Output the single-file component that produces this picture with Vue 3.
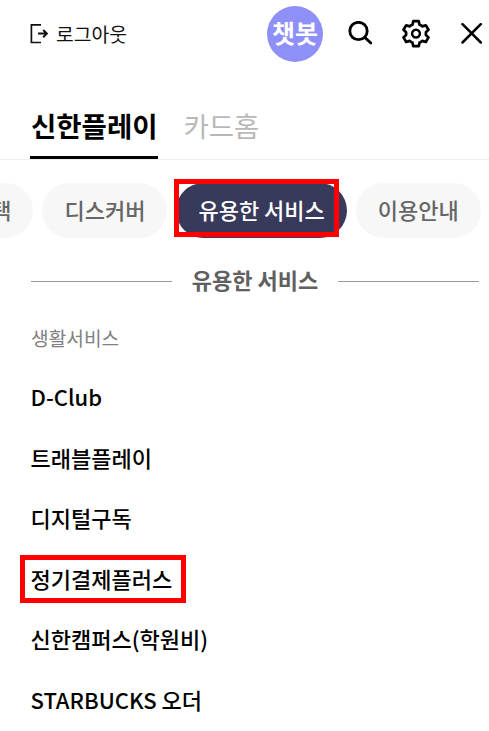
<script setup>
import { ref } from 'vue'

const tabs = ['신한플레이', '카드홈']
const activeTab = ref('신한플레이')

const categories = ['혜택', '디스커버', '유용한 서비스', '이용안내']
const activeCategory = ref('유용한 서비스')

const services = [
  { name: 'D-Club' },
  { name: '트래블플레이' },
  { name: '디지털구독' },
  { name: '정기결제플러스', marked: true },
  { name: '신한캠퍼스(학원비)' },
  { name: 'STARBUCKS 오더' }
]
</script>

<template>
  <div class="menu-page">
    <header class="top-bar">
      <button class="logout">
        <svg width="19" height="20" viewBox="0 0 19 20" fill="none" stroke="#111" stroke-width="1.7">
          <path d="M11 .9H1.4v17.6H11" />
          <path d="M8 9.6h8.6M13.2 6l3.6 3.6-3.6 3.6" stroke-width="2" />
        </svg>
        <span>로그아웃</span>
      </button>
      <div class="actions">
        <button class="chatbot">챗봇</button>
        <button class="icon-button search">
          <svg width="26" height="26" viewBox="0 0 26 26" fill="none" stroke="#000" stroke-width="2.8" stroke-linecap="round">
            <circle cx="10.5" cy="10" r="8.7" />
            <path d="M16.9 16.4l5.9 5.7" />
          </svg>
        </button>
        <button class="icon-button settings">
          <svg width="30" height="30" viewBox="0 0 30 30" fill="none" stroke="#000" stroke-width="2.7" stroke-linejoin="round">
            <path d="M12.3 2.2h5.4l.9 3.6q1.6.5 2.6 1.6l3.6-1.1 2.7 4.5-2.6 2.4v2.8l2.6 2.4-2.7 4.6-3.6-1.1q-1 1.1-2.6 1.6l-.9 3.7h-5.4l-.9-3.7q-1.6-.5-2.6-1.6L5.2 23l-2.7-4.6L5.1 16v-2.8l-2.6-2.4 2.7-4.5 3.6 1.1q1-1.1 2.6-1.6z" />
            <circle cx="15" cy="14.6" r="3.9" stroke-width="2.5" />
          </svg>
        </button>
        <button class="icon-button close">
          <svg width="22" height="22" viewBox="0 0 22 22" fill="none" stroke="#000" stroke-width="2.5" stroke-linecap="round">
            <path d="M1.5 1.2l18.3 18.3M19.8 1.2L1.5 19.5" />
          </svg>
        </button>
      </div>
    </header>

    <nav class="tabs">
      <button
        v-for="tab in tabs"
        :key="tab"
        class="tab"
        :class="{ active: tab === activeTab }"
        @click="activeTab = tab"
      >
        {{ tab }}
      </button>
    </nav>

    <div class="categories">
      <button
        v-for="category in categories"
        :key="category"
        class="category"
        :class="{ active: category === activeCategory }"
        @click="activeCategory = category"
      >
        {{ category }}
        <span v-if="category === '유용한 서비스'" class="mark"></span>
      </button>
    </div>

    <h2 class="section-title"><span>유용한 서비스</span></h2>

    <h3 class="group-title">생활서비스</h3>
    <ul class="services">
      <li v-for="service in services" :key="service.name" class="service">
        {{ service.name }}
        <span v-if="service.marked" class="mark"></span>
      </li>
    </ul>
  </div>
</template>

<style>
body {
  margin: 0;
  background: #fff;
}
</style>

<style scoped>
.menu-page {
  width: 100%;
  height: 731px;
  overflow: hidden;
  background: #fff;
  color: #111;
  font-family: "Noto Sans CJK KR", sans-serif;
}

button {
  border: none;
  margin: 0;
  padding: 0;
  background: none;
  color: inherit;
  font: inherit;
  white-space: nowrap;
  cursor: pointer;
}

svg {
  display: block;
}

.top-bar {
  display: flex;
  align-items: center;
  justify-content: space-between;
  height: 67px;
  padding: 0 6px 0 30px;
}

.logout {
  display: flex;
  align-items: center;
  gap: 7px;
  font-size: 19.3px;
  line-height: 28px;
}

.actions {
  display: flex;
  align-items: center;
}

.chatbot {
  width: 56px;
  height: 56px;
  padding-bottom: 4px;
  border-radius: 50%;
  background: #8f8ff8;
  color: #fff;
  font-size: 25px;
  font-weight: 700;
  line-height: 52px;
}

.search {
  margin-left: 25px;
}

.settings {
  margin-left: 27px;
}

.close {
  margin-left: 30px;
}

.tabs {
  display: flex;
  gap: 25px;
  height: 92px;
  padding-left: 30px;
  border-bottom: 1px solid #eee;
}

.tab {
  height: 92px;
  padding-top: 27px;
  padding-left: 1px;
  border-bottom: 3px solid transparent;
  box-sizing: border-box;
  color: #b8b8b8;
  font-size: 27.5px;
  line-height: 62px;
}

.tab.active {
  border-color: #000;
  color: #000;
  font-weight: 700;
}

.categories {
  display: flex;
  gap: 9px;
  margin: 23px 0 0 -51px;
}

.category {
  position: relative;
  flex: none;
  height: 55px;
  padding: 0 22px 4px;
  border-radius: 28px;
  background: #f7f7f7;
  color: #666;
  font-size: 22px;
  font-weight: 500;
}

.category.active {
  background: #383a5b;
  color: #fff;
}

.mark {
  position: absolute;
  border: 5px solid #f00;
}

.category .mark {
  top: -4px;
  right: 7.5px;
  bottom: 1px;
  left: -2px;
}

.section-title {
  display: flex;
  align-items: center;
  gap: 20px;
  margin: 29px 10px 0 31px;
  color: #606060;
  font-size: 22px;
  font-weight: 700;
  line-height: 32px;
}

.section-title span {
  margin-top: -4px;
}

.section-title::before,
.section-title::after {
  content: "";
  flex: 1;
  height: 1px;
  background: #999;
}

.group-title {
  margin: 29px 0 0 31px;
  color: #808080;
  font-size: 19.2px;
  font-weight: 400;
  line-height: 28px;
}

.services {
  display: flex;
  flex-direction: column;
  align-items: flex-start;
  gap: 12.6px;
  margin: 20px 0 0 30.5px;
  padding: 0;
  list-style: none;
}

.service {
  position: relative;
  color: #000;
  font-size: 22px;
  font-weight: 500;
  line-height: 48px;
}

.service .mark {
  top: 1px;
  right: -14px;
  bottom: -1px;
  left: -11px;
}
</style>
